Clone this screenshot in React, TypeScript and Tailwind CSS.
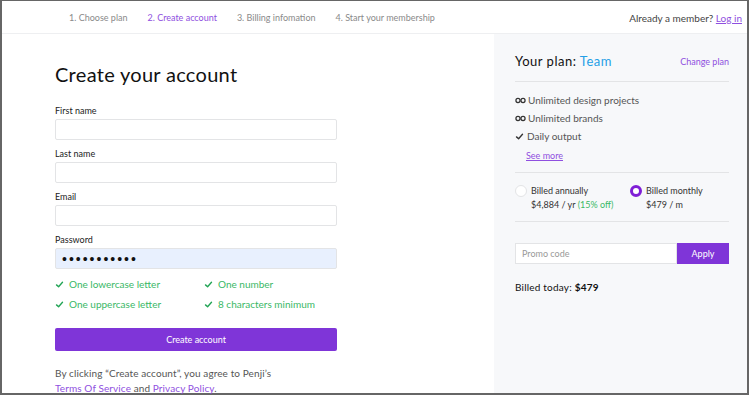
import React from "react";

const font = { fontFamily: "Lato, 'Open Sans', Arial, sans-serif" };

function Check({ className = "" }: { className?: string }) {
  return (
    <svg viewBox="0 0 12 12" className={className} fill="none" stroke="currentColor" strokeWidth="1.8" strokeLinecap="round" strokeLinejoin="round">
      <path d="M2 6.5 L4.8 9 L10 3" />
    </svg>
  );
}

function Infinity_() {
  return (
    <svg viewBox="0 0 14 8" className="w-[11px] h-[7px]" fill="none" stroke="#333" strokeWidth="1.6">
      <circle cx="3.8" cy="4" r="2.6" />
      <circle cx="10.2" cy="4" r="2.6" />
    </svg>
  );
}

function Field({ label, value, filled }: { label: string; value?: string; filled?: boolean }) {
  return (
    <div className="flex flex-col">
      <div className="text-[9px] text-[#222] h-[11px] leading-[11px]">{label}</div>
      <div
        className={`mt-[3px] h-[21px] w-[282px] rounded-[2px] border border-[#e3e4e6] flex items-center px-[6px] ${filled ? "bg-[#e8f0fe]" : "bg-white"}`}
      >
        {value && (
          <span style={{ fontFamily: "'Liberation Sans', Arial, sans-serif" }} className="text-[14px] tracking-[2px] text-[#111] leading-none">
            {value}
          </span>
        )}
      </div>
    </div>
  );
}

function Req({ text }: { text: string }) {
  return (
    <div className="flex items-center gap-[5px] text-[10px] text-[#39b866] h-[14px]">
      <Check className="w-[9px] h-[9px] text-[#22a455]" />
      <span>{text}</span>
    </div>
  );
}

export default function App() {
  return (
    <div style={font} className="w-[750px] h-[396px] bg-white overflow-hidden">
      <div className="w-[749px] h-[395px] border-t border-l-2 border-r-2 border-b-2 border-[#666] flex flex-col">
        {/* header */}
        <div className="h-[33px] shrink-0 border-b border-[#eeeff1] flex items-center pt-[2px] pl-[67px] pr-[5px] text-[9px] text-[#8a8a8a]">
          <span>1. Choose plan</span>
          <span className="ml-[20px] text-[#8f4fe0]">2. Create account</span>
          <span className="ml-[20px]">3. Billing infomation</span>
          <span className="ml-[20px]">4. Start your membership</span>
          <span className="ml-auto text-[10px] text-[#444]">Already a member? <span className="text-[#8f4fe0] underline">Log in</span></span>
        </div>
        <div className="flex flex-1 min-h-0">
          {/* left */}
          <div className="w-[492px] shrink-0 pl-[53px] pt-[28px]">
            <h1 className="text-[20px] text-[#111] leading-[24px] tracking-[0.3px]">Create your account</h1>
            <div className="mt-[19px] flex flex-col gap-[8px]">
              <Field label="First name" />
              <Field label="Last name" />
              <Field label="Email" />
              <Field label="Password" value="•••••••••••" filled />
            </div>
            <div className="mt-[8px] grid grid-cols-[149px_1fr] w-[282px] gap-y-[6px] leading-[14px]">
              <Req text="One lowercase letter" />
              <Req text="One number" />
              <Req text="One uppercase letter" />
              <Req text="8 characters minimum" />
            </div>
            <button className="mt-[17px] w-[282px] h-[23px] rounded-[2px] bg-[#7f35d8] text-white text-[9px] flex items-center justify-center">
              Create account
            </button>
            <div className="mt-[15px] text-[10px] text-[#555] leading-[15px] tracking-[0.1px]">
              <div>By clicking “Create account”, you agree to Penji’s</div>
              <div>
                <span className="text-[#8f4fe0]">Terms Of Service</span> and <span className="text-[#8f4fe0]">Privacy Policy</span>.
              </div>
            </div>
          </div>
          {/* right */}
          <div className="flex-1 bg-[#f7f8fa] pl-[21px] pr-[18px] pt-[18px]">
            <div className="flex items-center justify-between h-[20px] pb-0">
              <div className="text-[13px] text-[#111] tracking-[0.5px]">
                Your plan: <span className="text-[#259fe6]">Team</span>
              </div>
              <div className="text-[9px] text-[#8f4fe0]">Change plan</div>
            </div>
            <div className="mt-[9px] border-t border-[#e3e4e6]" />
            <div className="mt-[11px] flex flex-col gap-[4px] text-[10px] text-[#555] leading-[14px]">
              <div className="flex items-center gap-[2px]"><Infinity_ /><span>Unlimited design projects</span></div>
              <div className="flex items-center gap-[2px]"><Infinity_ /><span>Unlimited brands</span></div>
              <div className="flex items-center gap-[3px]"><Check className="w-[9px] h-[9px] text-[#333]" /><span>Daily output</span></div>
              <div className="pl-[11px] text-[9px] text-[#8f4fe0] underline mt-[2px]">See more</div>
            </div>
            <div className="mt-[9px] border-t border-[#e3e4e6]" />
            <div className="mt-[11px] flex text-[9px] text-[#333] leading-[14px]">
              <div className="flex w-[115px] gap-[4px]">
                <div className="w-[12px] h-[12px] rounded-full bg-white border border-[#e3e4e6] mt-[1px]" />
                <div>
                  <div>Billed annually</div>
                  <div>$4,884 / yr <span className="text-[#39b866]">(15% off)</span></div>
                </div>
              </div>
              <div className="flex gap-[4px]">
                <div className="w-[12px] h-[12px] rounded-full border-[3px] border-[#7f1fd6] bg-white mt-[1px]" />
                <div>
                  <div>Billed monthly</div>
                  <div>$479 / m</div>
                </div>
              </div>
            </div>
            <div className="mt-[9px] border-t border-[#e3e4e6]" />
            <div className="mt-[21px] flex h-[21px]">
              <div className="flex-1 bg-white border border-[#e3e4e6] flex items-center px-[6px] text-[9px] text-[#999]">Promo code</div>
              <div className="w-[52px] bg-[#7f35d8] text-white text-[9px] flex items-center justify-center">Apply</div>
            </div>
            <div className="mt-[16px] text-[10px] text-[#111] tracking-[0.2px]">
              Billed today: <span className="font-bold">$479</span>
            </div>
          </div>
        </div>
      </div>
    </div>
  );
}
